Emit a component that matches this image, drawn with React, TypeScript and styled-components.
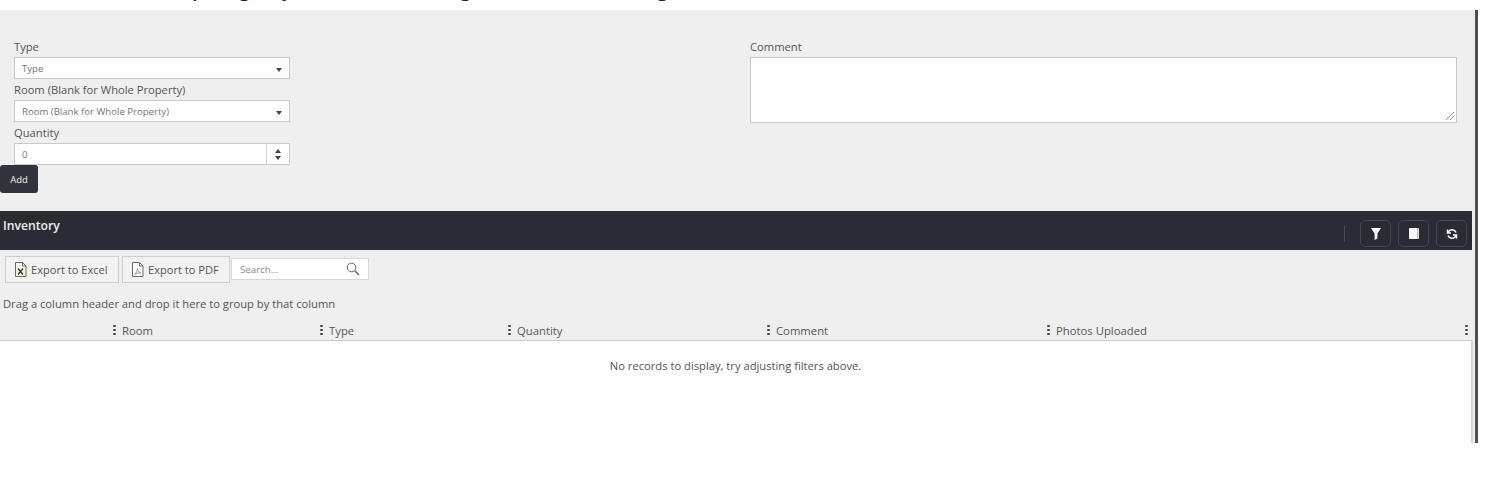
import React from "react";
import styled, { createGlobalStyle } from "styled-components";

const GlobalStyle = createGlobalStyle`
  html, body {
    margin: 0;
    padding: 0;
    background: #fff;
    font-family: "Open Sans", "Liberation Sans", sans-serif;
    color: #555;
  }
`;

const Page = styled.div`
  display: flex;
  flex-flow: column;
  width: 1500px;
  height: 478px;
  overflow: hidden;
`;

const TitleClip = styled.div`
  display: flex;
  flex-shrink: 0;
  height: 10px;
  overflow: hidden;
  padding-left: 192px;
`;

const TitleGlyph = styled.span<{ $width: number }>`
  display: block;
  flex: 0 0 ${(p) => p.$width}px;
  margin-top: -25px;
  font-size: 20px;
  line-height: 27px;
  font-weight: 600;
  color: #222;
`;

const Panel = styled.div`
  display: flex;
  flex-flow: column;
  width: 1475px;
  height: 433px;
  background: #efefef;
  border-right: solid 3px #505050;
`;

const FormArea = styled.div`
  display: grid;
  grid-template-columns: 276px 707px;
  column-gap: 460px;
  flex-shrink: 0;
  height: 201px;
  padding: 29px 0 0 14px;
  box-sizing: border-box;
  position: relative;
`;

const Field = styled.div`
  display: flex;
  flex-flow: column;
`;

const Label = styled.label`
  display: block;
  height: 18px;
  font-size: 11.2px;
  line-height: 16px;
  color: #555;
`;

const InputBox = styled.div`
  display: flex;
  align-items: center;
  justify-content: space-between;
  box-sizing: border-box;
  height: 22px;
  margin-bottom: 3px;
  padding-left: 7px;
  border: solid 1px #c9c9c9;
  background: #fff;
  font-size: 9.6px;
  color: #777;
`;

const Caret = styled.span<{ $up?: boolean }>`
  display: block;
  width: 0;
  height: 0;
  border-left: 3.5px solid transparent;
  border-right: 3.5px solid transparent;
  ${(p) =>
    p.$up
      ? "border-bottom: 4px solid #444;"
      : "border-top: 4px solid #444;"}
`;

const SelectCaret = styled(Caret)`
  margin: 4px 7px 0 0;
`;

const Spinner = styled.div`
  display: flex;
  flex-flow: column;
  align-items: center;
  justify-content: center;
  gap: 3px;
  width: 22px;
  height: 100%;
  border-left: solid 1px #d5d5d5;
`;

const AddButton = styled.button`
  position: absolute;
  left: 0;
  top: 155px;
  width: 38px;
  height: 28px;
  padding: 0;
  border: 0;
  border-radius: 3px;
  background: #31343d;
  color: #f2f2f2;
  font-family: inherit;
  font-size: 9.5px;
`;

const CommentBox = styled.div`
  position: relative;
  box-sizing: border-box;
  height: 66px;
  border: solid 1px #c9c9c9;
  background: #fff;
`;

const ResizeGrip = styled.svg`
  position: absolute;
  right: 1px;
  bottom: 1px;
`;

const Grid = styled.div`
  display: flex;
  flex-flow: column;
  flex: 1;
  width: 1472px;
`;

const GridBar = styled.div`
  display: flex;
  align-items: center;
  justify-content: space-between;
  flex-shrink: 0;
  height: 39px;
  padding: 0 5px 0 3px;
  box-sizing: border-box;
  background: #2a2c34;
  color: #eee;
  font-size: 12.2px;
`;

const BarTitle = styled.span`
  margin-top: -11px;
  font-weight: 600;
`;

const BarActions = styled.div`
  display: flex;
  align-items: center;
  gap: 7px;
  margin-top: 6px;
`;

const BarDivider = styled.span`
  width: 1px;
  height: 16px;
  margin-right: 8px;
  background: #4a4c54;
`;

const BarButton = styled.button`
  display: flex;
  align-items: center;
  justify-content: center;
  width: 31px;
  height: 27px;
  padding: 0;
  border: solid 1px #44464e;
  border-radius: 5px;
  background: transparent;
`;

const Toolbar = styled.div`
  display: flex;
  align-items: center;
  flex-shrink: 0;
  height: 22px;
  padding: 8px 0 0 5px;
`;

const ExportButton = styled.button<{ $width: number }>`
  display: flex;
  align-items: center;
  gap: 4px;
  box-sizing: border-box;
  width: ${(p) => p.$width}px;
  height: 27px;
  margin-right: 3px;
  padding: 0 0 0 8px;
  border: solid 1px #cfcfcf;
  background: #f2f2f2;
  color: #555;
  font-family: inherit;
  font-size: 11.1px;
  white-space: nowrap;
`;

const SearchBox = styled.div`
  display: flex;
  align-items: center;
  justify-content: space-between;
  box-sizing: border-box;
  width: 138px;
  height: 22px;
  margin-left: -2px;
  padding: 0 8px;
  border: solid 1px #d8d8d8;
  background: #fff;
  font-size: 9.7px;
  color: #888;
`;

const GroupHint = styled.div`
  flex-shrink: 0;
  margin-top: 16px;
  padding-left: 3px;
  height: 16px;
  font-size: 11.2px;
  line-height: 15px;
  color: #555;
  white-space: nowrap;
`;

const HeaderRow = styled.div`
  display: grid;
  grid-template-columns: 207px 188px 259px 280px 1fr 6px;
  flex-shrink: 0;
  box-sizing: border-box;
  height: 29px;
  padding: 8px 1px 0 113px;
  align-items: center;
  border-bottom: solid 1px #cdcdcd;
  font-size: 11.3px;
  color: #555;
`;

const HeaderCell = styled.div`
  display: flex;
  align-items: center;
  gap: 6px;
  white-space: nowrap;
`;

const Kebab = styled.span`
  display: flex;
  flex-flow: column;
  gap: 1.5px;
  width: 3px;
  > i {
    display: block;
    width: 2.5px;
    height: 2.5px;
    border-radius: 50%;
    background: #444;
  }
`;

const GridBody = styled.div`
  flex: 1;
  box-sizing: border-box;
  padding-top: 17px;
  background: #fff;
  border-right: solid 2px #d4d4d4;
  margin-right: -1px;
  text-align: center;
  font-size: 11.2px;
  line-height: 15px;
  color: #555;
`;

const KebabDots = () => (
  <Kebab>
    <i />
    <i />
    <i />
  </Kebab>
);

const columns = ["Room", "Type", "Quantity", "Comment", "Photos Uploaded"];
const titleGlyphs: [string, number][] = [
  ["p", 47],
  ["g", 43],
  ["y", 178],
  ["g", 197],
  ["g", 20],
];

export default function App() {
  return (
    <Page>
      <GlobalStyle />
      <TitleClip>
        {titleGlyphs.map(([glyph, width], i) => (
          <TitleGlyph key={i} $width={width}>
            {glyph}
          </TitleGlyph>
        ))}
      </TitleClip>
      <Panel>
        <FormArea>
          <Field>
            <Label>Type</Label>
            <InputBox>
              Type
              <SelectCaret />
            </InputBox>
            <Label>Room (Blank for Whole Property)</Label>
            <InputBox>
              Room (Blank for Whole Property)
              <SelectCaret />
            </InputBox>
            <Label>Quantity</Label>
            <InputBox>
              0
              <Spinner>
                <Caret $up />
                <Caret />
              </Spinner>
            </InputBox>
          </Field>
          <Field>
            <Label>Comment</Label>
            <CommentBox>
              <ResizeGrip width="10" height="10" viewBox="0 0 10 10">
                <path d="M1 9 L9 1 M5 9 L9 5" stroke="#999" strokeWidth="1" />
              </ResizeGrip>
            </CommentBox>
          </Field>
          <AddButton>Add</AddButton>
        </FormArea>
        <Grid>
          <GridBar>
            <BarTitle>Inventory</BarTitle>
            <BarActions>
              <BarDivider />
              <BarButton>
                <svg width="10" height="12" viewBox="0 0 10 12">
                  <path d="M0 0H10L6.4 5.5V10.5L3.6 12V5.5Z" fill="#fff" />
                </svg>
              </BarButton>
              <BarButton>
                <svg width="10" height="11" viewBox="0 0 10 11">
                  <rect width="10" height="11" rx="1" fill="#fff" />
                  <rect x="8" width="1.4" height="11" fill="#c9b6c0" />
                </svg>
              </BarButton>
              <BarButton>
                <svg width="12" height="12" viewBox="0 0 24 24" fill="none" stroke="#fff" strokeWidth="3">
                  <path d="M20 9a8.5 8.5 0 0 0-15-2L3 9.5" />
                  <path d="M3 3v7h7" />
                  <path d="M4 15a8.5 8.5 0 0 0 15 2l2-2.5" />
                  <path d="M21 21v-7h-7" />
                </svg>
              </BarButton>
            </BarActions>
          </GridBar>
          <Toolbar>
            <ExportButton $width={114}>
              <svg width="13" height="15" viewBox="0 0 13 15" fill="none">
                <path d="M1.5 .5H8.5L12 4V14.5H1.5Z" fill="#f6f4e8" stroke="#6b6b5e" />
                <path d="M8.5 .5V4H12" stroke="#6b6b5e" />
                <path d="M4 6.5L9 12.5M9 6.5L4 12.5" stroke="#333" strokeWidth="1.3" />
              </svg>
              Export to Excel
            </ExportButton>
            <ExportButton $width={108}>
              <svg width="13" height="15" viewBox="0 0 13 15" fill="none">
                <path d="M1.5 .5H8.5L12 4V14.5H1.5Z" fill="#fbfbfb" stroke="#6d6d6d" />
                <path d="M8.5 .5V4H12" stroke="#6d6d6d" />
                <path d="M3.5 12.5C5.5 11 6.5 8.5 6.3 6.5C6.8 9 8 10.5 10 11C8 10.8 5.5 11.3 3.5 12.5Z" stroke="#888" strokeWidth=".8" />
              </svg>
              Export to PDF
            </ExportButton>
            <SearchBox>
              Search...
              <svg width="14" height="14" viewBox="0 0 14 14" fill="none" stroke="#666">
                <circle cx="5.5" cy="5.5" r="4.3" strokeWidth="1" />
                <path d="M8.8 8.8L13 13" strokeWidth="1.5" />
              </svg>
            </SearchBox>
          </Toolbar>
          <GroupHint>Drag a column header and drop it here to group by that column</GroupHint>
          <HeaderRow>
            {columns.map((name) => (
              <HeaderCell key={name}>
                <KebabDots />
                {name}
              </HeaderCell>
            ))}
            <HeaderCell>
              <KebabDots />
            </HeaderCell>
          </HeaderRow>
          <GridBody>No records to display, try adjusting filters above.</GridBody>
        </Grid>
      </Panel>
    </Page>
  );
}
